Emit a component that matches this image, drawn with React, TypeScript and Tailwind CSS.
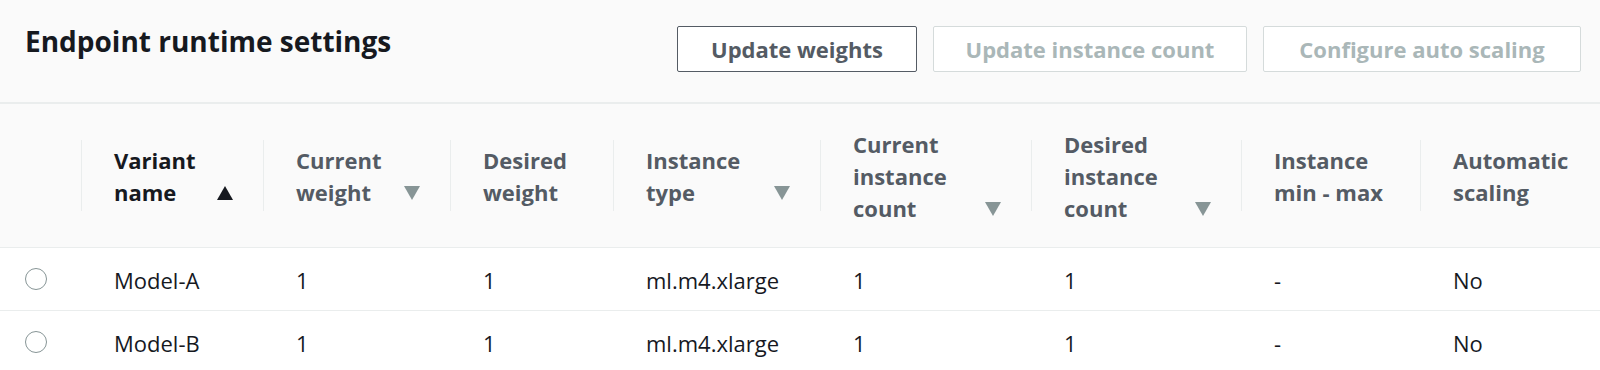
import React from "react";

type Col = {
  label: React.ReactNode;
  sort?: "asc" | "desc";
  active?: boolean;
};

const cols: Col[] = [
  { label: <>Variant<br />name</>, sort: "asc", active: true },
  { label: <>Current<br />weight</>, sort: "desc" },
  { label: <>Desired<br />weight</> },
  { label: <>Instance<br />type</>, sort: "desc" },
  { label: <>Current<br />instance<br />count</>, sort: "desc" },
  { label: <>Desired<br />instance<br />count</>, sort: "desc" },
  { label: <>Instance<br />min - max</> },
  { label: <>Automatic<br />scaling</> },
];

const rows = [
  ["Model-A", "1", "1", "ml.m4.xlarge", "1", "1", "-", "No"],
  ["Model-B", "1", "1", "ml.m4.xlarge", "1", "1", "-", "No"],
];

const gridCols =
  "grid grid-cols-[81px_182px_187px_163px_207px_211px_210px_179px_180px]";

function SortIcon({ dir, active }: { dir: "asc" | "desc"; active?: boolean }) {
  return (
    <svg width="16" height="14" viewBox="0 0 16 14" className="mb-[8px] shrink-0">
      <polygon
        points={dir === "asc" ? "8,0 16,14 0,14" : "0,0 16,0 8,14"}
        fill={active ? "#16191f" : "#879596"}
      />
    </svg>
  );
}

export default function App() {
  return (
    <div className="w-[1600px] bg-white font-['Open_Sans',sans-serif]">
      {/* panel header */}
      <div className="h-[104px] bg-[#fafafa] border-b-2 border-[#eaeded] flex justify-between items-start pl-[25px] pr-[19px]">
        <h2 className="pt-[23px] text-[28px] leading-[36px] font-bold text-[#16191f]">
          Endpoint runtime settings
        </h2>
        <div className="flex gap-[16px] pt-[26px]">
          <button className="w-[240px] h-[46px] rounded-[2px] border border-[#545b64] bg-white text-[22px] font-bold text-[#545b64]">
            Update weights
          </button>
          <button className="w-[314px] h-[46px] rounded-[2px] border border-[#d5dbdb] bg-white text-[22px] font-bold text-[#aab7b8]">
            Update instance count
          </button>
          <button className="w-[318px] h-[46px] rounded-[2px] border border-[#d5dbdb] bg-white text-[22px] font-bold text-[#aab7b8]">
            Configure auto scaling
          </button>
        </div>
      </div>

      {/* table head */}
      <div className={`${gridCols} h-[144px] bg-[#fafafa] border-b border-[#eaeded]`}>
        <div />
        {cols.map((c, i) => (
          <div key={i} className="flex items-center">
            <div className="w-px h-[71px] bg-[#eaeded]" />
            <div className="flex flex-1 items-end justify-between pl-[32px] pr-[30px]">
              <div
                className={`text-[22px] leading-[32px] font-bold ${
                  c.active ? "text-[#16191f]" : "text-[#545b64]"
                }`}
              >
                {c.label}
              </div>
              {c.sort && <SortIcon dir={c.sort} active={c.active} />}
            </div>
          </div>
        ))}
      </div>

      {/* rows */}
      {rows.map((r, i) => (
        <div key={i} className={`${gridCols} h-[63px] border-b border-[#eaeded] items-center`}>
          <div className="pl-[25px]">
            <div className="w-[22px] h-[22px] rounded-full border-[1.5px] border-[#879596] bg-white" />
          </div>
          {r.map((v, j) => (
            <div key={j} className="pl-[33px] pt-[2px] text-[22px] leading-[32px] text-[#16191f]">
              {v}
            </div>
          ))}
        </div>
      ))}
    </div>
  );
}
